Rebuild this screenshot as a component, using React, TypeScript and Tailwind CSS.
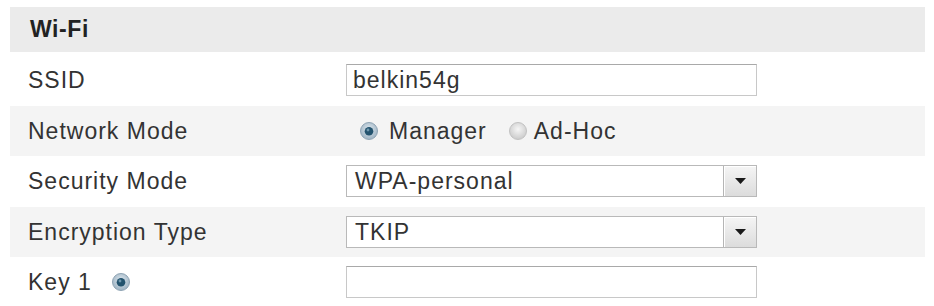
import React from 'react';

const font = { fontFamily: '"Liberation Sans", Arial, sans-serif' };

const Radio: React.FC<{ checked?: boolean }> = ({ checked }) => (
  <svg width="20" height="20" viewBox="0 0 20 20" className="shrink-0">
    <defs>
      <radialGradient id={checked ? 'rg-on' : 'rg-off'} cx="50%" cy="40%" r="60%">
        <stop offset="0%" stopColor={checked ? '#dde7ee' : '#f6f6f6'} />
        <stop offset="100%" stopColor={checked ? '#9db2c2' : '#cacaca'} />
      </radialGradient>
    </defs>
    <circle cx="10" cy="10" r="8.5" fill={`url(#${checked ? 'rg-on' : 'rg-off'})`} stroke={checked ? '#8fa4b4' : '#c2c2c2'} strokeWidth="1" />
    {checked && <circle cx="10" cy="10.3" r="4.3" fill="#23536e" />}
    {checked && <circle cx="9" cy="9" r="1.4" fill="#6e97ad" />}
  </svg>
);

const Select: React.FC<{ value: string }> = ({ value }) => (
  <div className="flex h-[32px] w-[411px] border border-[#b9b9b9] bg-white">
    <div className="flex flex-1 items-center pl-[8px] text-[#333]">{value}</div>
    <div className="flex w-[33px] items-center justify-center border-l border-[#b5b5b5] bg-gradient-to-b from-[#f5f5f5] to-[#dcdcdc] shadow-[inset_1px_1px_0_#ffffff]">
      <svg width="11" height="6" viewBox="0 0 11 6">
        <polygon points="0,0 11,0 5.5,6" fill="#1a1a1a" />
      </svg>
    </div>
  </div>
);

const Row: React.FC<{ label: React.ReactNode; gray?: boolean; children: React.ReactNode }> = ({ label, gray, children }) => (
  <div className={`flex h-[50.5px] items-center ${gray ? 'bg-[#f4f4f4]' : 'bg-white'}`}>
    <div className="flex w-[336px] items-center pl-[18px] text-[#333]">{label}</div>
    <div className="flex items-center">{children}</div>
  </div>
);

const App: React.FC = () => {
  return (
    <div className="h-[306px] w-[934px] overflow-hidden bg-white pl-[10px] pr-[9px] pt-[7px] text-[23px] tracking-[1px]" style={font}>
      <div className="mb-[3px] flex h-[45px] items-center bg-[#ebebeb] pl-[20px] font-bold tracking-[0.6px] text-[#222]">Wi-Fi</div>

      <Row label="SSID">
        <div className="flex h-[32px] w-[411px] items-center border border-[#c8c8c8] border-t-[#a9a9a9] pl-[6px] text-[#333]">
          belkin54g
        </div>
      </Row>

      <Row label="Network Mode" gray>
        <div className="flex items-center pl-[13px] text-[#333]">
          <Radio checked />
          <span className="ml-[10px]">Manager</span>
          <span className="ml-[21px]"><Radio /></span>
          <span className="ml-[6px]">Ad-Hoc</span>
        </div>
      </Row>

      <Row label="Security Mode">
        <Select value="WPA-personal" />
      </Row>

      <Row label="Encryption Type" gray>
        <Select value="TKIP" />
      </Row>

      <Row
        label={
          <>
            <span>Key 1</span>
            <span className="ml-[19px]"><Radio checked /></span>
          </>
        }
      >
        <div className="h-[32px] w-[411px] border border-[#c8c8c8] border-t-[#a9a9a9]" />
      </Row>
    </div>
  );
};

export default App;
